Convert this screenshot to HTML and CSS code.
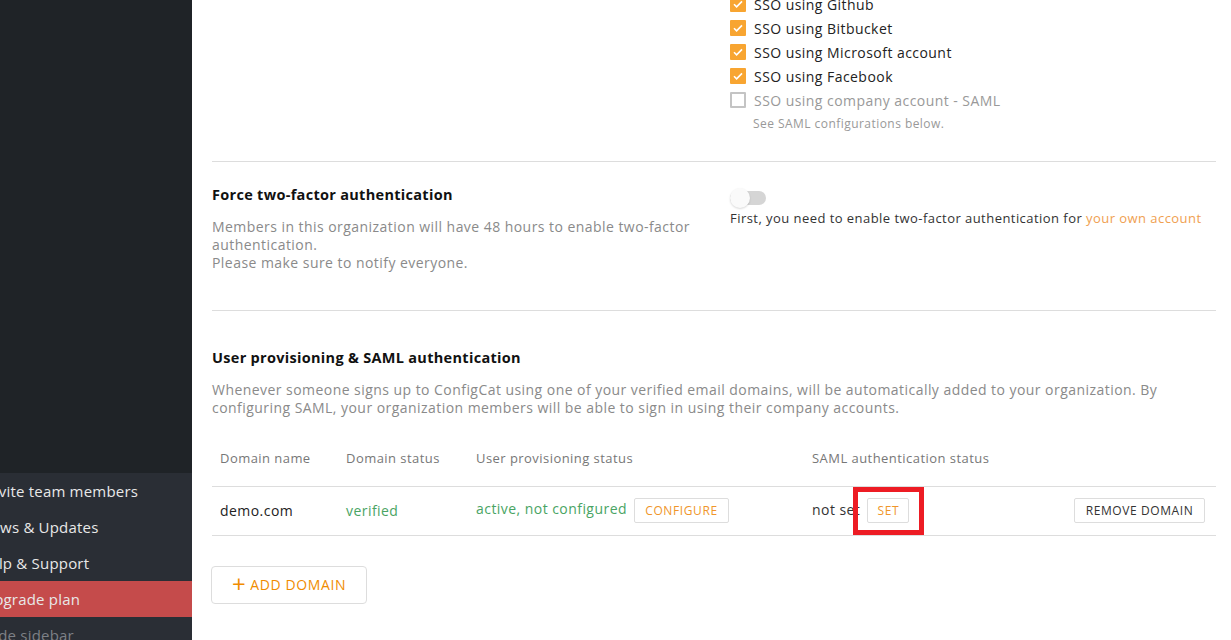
FILE: index.html
```html
<!DOCTYPE html>
<html lang="en">
<head>
<meta charset="utf-8">
<title>Organization authentication</title>
<link rel="stylesheet" href="styles.css">
</head>
<body>
<div class="layout">
  <aside class="sidebar">
    <div class="sidebar-top"></div>
    <nav class="sidebar-bottom">
      <div class="nav-item nav-invite">Invite team members</div>
      <div class="nav-item nav-news">News &amp; Updates</div>
      <div class="nav-item nav-help">Help &amp; Support</div>
      <div class="nav-item nav-upgrade">Upgrade plan</div>
      <div class="nav-item nav-muted">Hide sidebar</div>
    </nav>
  </aside>
  <main class="main">
    <section class="section section-sso">
      <div class="col-left"></div>
      <div class="col-right">
        <label class="check"><span class="box on"><svg viewBox="0 0 16 16"><path d="M4 8.3l2.6 2.6L12 5.4" fill="none" stroke="#fff" stroke-width="1.6"/></svg></span>SSO using Github</label>
        <label class="check"><span class="box on"><svg viewBox="0 0 16 16"><path d="M4 8.3l2.6 2.6L12 5.4" fill="none" stroke="#fff" stroke-width="1.6"/></svg></span>SSO using Bitbucket</label>
        <label class="check"><span class="box on"><svg viewBox="0 0 16 16"><path d="M4 8.3l2.6 2.6L12 5.4" fill="none" stroke="#fff" stroke-width="1.6"/></svg></span>SSO using Microsoft account</label>
        <label class="check"><span class="box on"><svg viewBox="0 0 16 16"><path d="M4 8.3l2.6 2.6L12 5.4" fill="none" stroke="#fff" stroke-width="1.6"/></svg></span>SSO using Facebook</label>
        <label class="check check-disabled"><span class="box off"></span>SSO using company account - SAML</label>
        <div class="hint">See SAML configurations below.</div>
      </div>
    </section>

    <section class="section section-2fa">
      <div class="col-left">
        <h3 class="title">Force two-factor authentication</h3>
        <p class="desc">Members in this organization will have 48 hours to enable two-factor authentication.<br>Please make sure to notify everyone.</p>
      </div>
      <div class="col-right">
        <div class="toggle"><span class="knob"></span></div>
        <p class="note">First, you need to enable two-factor authentication for <a class="link" href="#">your own account</a></p>
      </div>
    </section>

    <section class="section section-saml">
      <h3 class="title">User provisioning &amp; SAML authentication</h3>
      <p class="desc">Whenever someone signs up to ConfigCat using one of your verified email domains, will be automatically added to your organization. By configuring SAML, your organization members will be able to sign in using their company accounts.</p>
      <table class="domains">
        <thead>
          <tr>
            <th class="c1">Domain name</th>
            <th class="c2">Domain status</th>
            <th class="c3">User provisioning status</th>
            <th class="c4">SAML authentication status</th>
            <th class="c5"></th>
          </tr>
        </thead>
        <tbody>
          <tr>
            <td class="c1">demo.com</td>
            <td class="c2 ok">verified</td>
            <td class="c3"><span class="ok">active, not configured</span><button class="btn btn-orange">CONFIGURE</button></td>
            <td class="c4"><span class="plain">not set</span><span class="highlight"><button class="btn btn-orange">SET</button></span></td>
            <td class="c5"><button class="btn btn-dark">REMOVE DOMAIN</button></td>
          </tr>
        </tbody>
      </table>
      <button class="add-btn"><span class="plus">+</span>ADD DOMAIN</button>
    </section>
  </main>
</div>
</body>
</html>
```

FILE: styles.css
```css
* { box-sizing: border-box; }
html, body { margin: 0; padding: 0; }
body {
  font-family: "Open Sans", "DejaVu Sans", sans-serif;
  letter-spacing: 0.45px;
  color: #222;
  background: #fff;
  width: 1231px;
  height: 640px;
  overflow: hidden;
}
.layout { display: flex; height: 640px; }

.sidebar {
  width: 192px;
  flex: 0 0 192px;
  display: flex;
  flex-direction: column;
  overflow: hidden;
  background: #1f2327;
}
.sidebar-top { height: 473px; flex: 0 0 473px; background: #1f2327; }
.sidebar-bottom { flex: 1; background: #2a2e35; }
.nav-item {
  height: 36px;
  line-height: 36px;
  font-size: 15px;
  letter-spacing: 0.2px;
  color: #e8e8e8;
  white-space: nowrap;
}
.nav-invite { margin-left: -15px; }
.nav-news { margin-left: -20px; }
.nav-help { margin-left: -21px; }
.nav-upgrade { background: #c54b4b; text-indent: -17px; }
.nav-muted { color: #7d8086; margin-left: -17px; }

.main {
  flex: 1;
  padding: 0 15px 0 20px;
  min-width: 0;
}

.section {
  border-bottom: 1px solid #ddd;
  display: flex;
}
.col-left { width: 518px; flex: 0 0 518px; padding-right: 30px; }
.col-right { flex: 1; }

.section-sso { margin-top: -8px; padding-bottom: 25px; }
.check {
  display: flex;
  align-items: center;
  height: 24px;
  font-size: 14px;
  color: #222;
}
.box {
  width: 16px; height: 16px;
  margin-right: 8px;
  display: inline-flex;
  border-radius: 1px;
}
.box svg { width: 16px; height: 16px; }
.box.on { background: #f8a531; }
.box.off { border: 2px solid #c4c4c4; background: #fff; }
.check-disabled { color: #999; }
.hint { font-size: 12px; color: #999; margin-left: 23px; line-height: 24px; }

.section-2fa { padding-top: 23px; padding-bottom: 38px; }
.title { margin: 0; font-size: 14.5px; font-weight: 700; line-height: 20px; color: #111; letter-spacing: 0.3px; }
.desc { margin: 13px 0 0; font-size: 14px; line-height: 18px; color: #8a8a8a; }
.toggle {
  margin-top: 6px;
  width: 36px; height: 14px;
  border-radius: 7px;
  background: #d5d5d5;
  position: relative;
}
.knob {
  position: absolute;
  left: 0; top: -3px;
  width: 20px; height: 20px;
  border-radius: 50%;
  background: #fafafa;
  box-shadow: 0 1px 2px rgba(0,0,0,0.15);
}
.note { margin: 4px 0 0; font-size: 13px; line-height: 18px; color: #333; }
.link { color: #f0a050; text-decoration: none; }

.section-saml { display: block; border-bottom: none; padding-top: 37px; }
.section-saml .desc { margin-top: 13px; }

.domains {
  width: 100%;
  border-collapse: collapse;
  margin-top: 23px;
  table-layout: fixed;
}
.domains th {
  font-weight: 400;
  font-size: 13px;
  color: #777;
  text-align: left;
  padding: 0 8px 19px;
  height: 46px;
  vertical-align: bottom;
  border-bottom: 1px solid #ddd;
}
.domains td {
  height: 48px;
  font-size: 14px;
  padding: 0 8px;
  border-bottom: 1px solid #ddd;
  vertical-align: middle;
  white-space: nowrap;
}
.c1 { width: 126px; }
.c2 { width: 130px; }
.c3 { width: 336px; }
.c4 { width: 250px; }
.c5 { text-align: right !important; padding-right: 11px !important; }
.ok { color: #49a464; }
.plain { color: #333; }
.btn {
  font-family: inherit;
  font-size: 12px;
  letter-spacing: 0.6px;
  height: 25px;
  padding: 0 9px;
  background: #fff;
  border: 1px solid #ddd;
  border-radius: 2px;
  vertical-align: middle;
}
.btn-orange { color: #f0962a; }
.btn-dark { color: #333; }
.c3 .btn { margin-left: 7px; width: 95px; padding: 0; }
.c5 .btn { width: 131px; padding: 0; }
.highlight {
  display: inline-block;
  margin-left: -7px;
  padding: 6px 10px 6px 9px;
  border: 5px solid #ed1c24;
  vertical-align: middle;
  height: 48px;
}
.highlight .btn { width: 42px; padding: 0; }

.add-btn {
  margin-top: 30px;
  margin-left: -1px;
  width: 156px;
  height: 38px;
  font-family: inherit;
  font-size: 14px;
  letter-spacing: 0.6px;
  color: #f08c00;
  background: #fff;
  border: 1px solid #ddd;
  border-radius: 4px;
  display: inline-flex;
  align-items: center;
  justify-content: center;
}
.plus { font-size: 24px; font-weight: 400; margin-right: 4px; line-height: 1; margin-top: -2px; }
```
